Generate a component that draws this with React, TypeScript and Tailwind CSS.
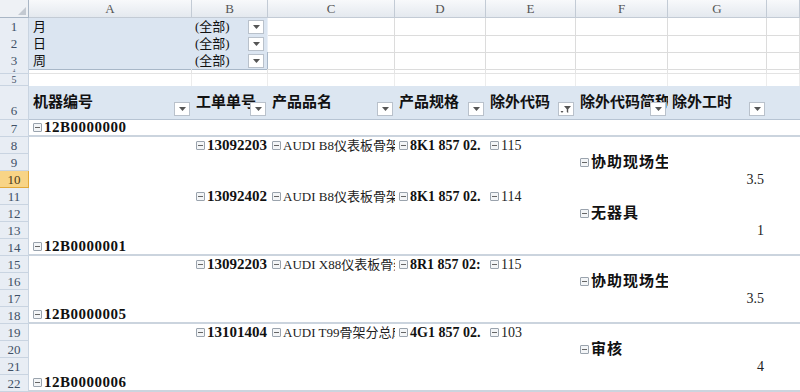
import React from 'react'

const grid = 'grid grid-cols-[29px_163px_76px_127px_91px_90px_92px_99px_33px]'

type Cell = { t: string; b?: boolean; m?: boolean; r?: boolean; s?: string }

const MinusBox = () => (
  <span className="inline-flex h-[9px] w-[9px] shrink-0 items-center justify-center rounded-[1px] border border-[#9aa3ad] bg-[#f3f5f7]">
    <span className="h-px w-[5px] bg-[#666]" />
  </span>
)

const DropButton = ({ filter }: { filter?: boolean }) => (
  <span className="flex h-[14px] w-[16px] items-center justify-center border border-[#b9c1cb] bg-white">
    {filter ? (
      <svg width="12" height="9" viewBox="0 0 12 9">
        <path d="M4 1h7L8.2 4.3V8L6.8 7V4.3z" fill="#555" />
        <path d="M0.5 6h3L2 8z" fill="#555" />
      </svg>
    ) : (
      <svg width="7" height="4" viewBox="0 0 7 4">
        <path d="M0 0h7L3.5 4z" fill="#555" />
      </svg>
    )}
  </span>
)

const RowNum = ({ n, active, end }: { n: string; active?: boolean; end?: boolean }) => (
  <div
    className={
      active
        ? 'flex items-center justify-center overflow-hidden border-b border-r border-[#e2a93a] bg-[#f8d486] text-[13px] leading-[13px] text-[#4a3a1a]'
        : end
        ? 'flex items-end justify-center overflow-hidden border-b border-r border-[#c9d4e1] bg-[#e8edf4] pb-[2px] text-[13px] leading-[13px] text-[#3f5066]'
        : 'flex items-center justify-center overflow-hidden border-b border-r border-[#c9d4e1] bg-[#e8edf4] text-[13px] leading-[13px] text-[#3f5066]'
    }
  >
    {n}
  </div>
)

const data: { n: string; sep?: boolean; cells: (Cell | null)[] }[] = [
  { n: '7', sep: true, cells: [{ t: '12B0000000', b: true, m: true, s: 'a' }] },
  {
    n: '8',
    cells: [
      null,
      { t: '13092203', b: true, m: true },
      { t: 'AUDI B8仪表板骨架', m: true, s: 'c' },
      { t: '8K1 857 02.', b: true, m: true, s: 'd' },
      { t: '115', m: true },
    ],
  },
  { n: '9', cells: [null, null, null, null, null, { t: '协助现场生产', b: true, m: true, s: 'f' }] },
  { n: '10', cells: [null, null, null, null, null, null, { t: '3.5', r: true }] },
  {
    n: '11',
    cells: [
      null,
      { t: '13092402', b: true, m: true },
      { t: 'AUDI B8仪表板骨架', m: true, s: 'c' },
      { t: '8K1 857 02.', b: true, m: true, s: 'd' },
      { t: '114', m: true },
    ],
  },
  { n: '12', cells: [null, null, null, null, null, { t: '无器具', b: true, m: true, s: 'f' }] },
  { n: '13', cells: [null, null, null, null, null, null, { t: '1', r: true }] },
  { n: '14', sep: true, cells: [{ t: '12B0000001', b: true, m: true, s: 'a' }] },
  {
    n: '15',
    cells: [
      null,
      { t: '13092203', b: true, m: true },
      { t: 'AUDI X88仪表板骨架', m: true, s: 'c' },
      { t: '8R1 857 02:', b: true, m: true, s: 'd' },
      { t: '115', m: true },
    ],
  },
  { n: '16', cells: [null, null, null, null, null, { t: '协助现场生产', b: true, m: true, s: 'f' }] },
  { n: '17', cells: [null, null, null, null, null, null, { t: '3.5', r: true }] },
  { n: '18', sep: true, cells: [{ t: '12B0000005', b: true, m: true, s: 'a' }] },
  {
    n: '19',
    cells: [
      null,
      { t: '13101404', b: true, m: true },
      { t: 'AUDI T99骨架分总成', m: true, s: 'c' },
      { t: '4G1 857 02.', b: true, m: true, s: 'd' },
      { t: '103', m: true },
    ],
  },
  { n: '20', cells: [null, null, null, null, null, { t: '审核', b: true, m: true, s: 'f' }] },
  { n: '21', cells: [null, null, null, null, null, null, { t: '4', r: true }] },
  { n: '22', sep: true, cells: [{ t: '12B0000006', b: true, m: true, s: 'a' }] },
]

const textClass = (c: Cell) => {
  if (c.s === 'a') return 'text-[15px] font-bold tracking-[0.5px] text-[#111]'
  if (c.s === 'c') return 'text-[13px] text-[#222]'
  if (c.s === 'd') return 'text-[14px] font-bold text-[#111]'
  if (c.s === 'f') return 'text-[15px] font-bold tracking-[1px] text-[#111]'
  if (c.b) return 'text-[15px] font-bold text-[#111]'
  return 'text-[14px] text-[#222]'
}

const headers = ['机器编号', '工单单号', '产品品名', '产品规格', '除外代码', '除外代码简称', '除外工时']

export default function App() {
  return (
    <div className="h-[392px] w-[800px] overflow-hidden bg-white font-['Liberation_Serif','Noto_Sans_CJK_SC',serif] leading-[17px] text-[#111]">
      {/* column letters */}
      <div className={`${grid} h-[18px]`}>
        <div className="flex items-end justify-end border-b border-r border-[#a9b6c5] bg-[#eef1f5] p-[2px]">
          <svg width="8" height="8" viewBox="0 0 8 8">
            <path d="M8 0v8H0z" fill="#c3c9d1" />
          </svg>
        </div>
        {['A', 'B', 'C', 'D', 'E', 'F', 'G', ''].map((l, i) => (
          <div
            key={i}
            className="flex items-center justify-center border-b border-r border-[#c3cbd5] bg-linear-to-b from-[#f8f9fb] to-[#e4e9ef] text-[13px] text-[#555]"
          >
            {l}
          </div>
        ))}
      </div>

      {/* page filters */}
      {[
        ['1', '月'],
        ['2', '日'],
        ['3', '周'],
      ].map(([n, label]) => (
        <div key={n} className={`${grid} h-[17px]`}>
          <RowNum n={n} />
          <div
            className={
              n === '3'
                ? 'flex items-center border-b border-[#a8b7c8] bg-[#dbe5f1] pl-[4px] text-[13px] text-[#111]'
                : 'flex items-center border-b border-[#e9eff7] bg-[#dbe5f1] pl-[4px] text-[13px] text-[#111]'
            }
          >
            {label}
          </div>
          <div
            className={
              n === '3'
                ? 'flex items-center justify-between border-b border-r border-[#a8b7c8] bg-[#dbe5f1] pl-[3px] pr-[3px] text-[13px] text-[#111]'
                : 'flex items-center justify-between border-b border-r border-[#e9eff7] bg-[#dbe5f1] pl-[3px] pr-[3px] text-[13px] text-[#111]'
            }
          >
            <span>(全部)</span>
            <DropButton />
          </div>
          {[0, 1, 2, 3, 4, 5].map((i) => (
            <div key={i} className="border-b border-r border-[#dcdcdc]" />
          ))}
        </div>
      ))}

      {/* rows 4 and 5, squeezed */}
      <div className={`${grid} h-[5px]`}>
        <div className="flex items-center justify-center overflow-hidden border-b border-r border-[#c9d4e1] bg-[#e8edf4] text-[5px] leading-[4px] text-[#3f5066]">
          4
        </div>
        {[0, 1, 2, 3, 4, 5, 6, 7].map((i) => (
          <div key={i} className="border-b border-r border-[#e3e3e3]" />
        ))}
      </div>
      <div className={`${grid} h-[12px]`}>
        <div className="flex items-center justify-center overflow-hidden border-b border-r border-[#c9d4e1] bg-[#e8edf4] text-[10px] leading-[10px] text-[#3f5066]">
          5
        </div>
        {[0, 1, 2, 3, 4, 5, 6, 7].map((i) => (
          <div key={i} className="border-r border-[#ececec]" />
        ))}
      </div>

      {/* pivot header row */}
      <div className={`${grid} h-[34px]`}>
        <RowNum n="6" end />
        {headers.map((h, i) => (
          <div
            key={h}
            className="relative overflow-hidden whitespace-nowrap border-b border-[#b7c4d3] bg-[#dce6f1] pl-[4px] pt-[8px] text-[15px] font-bold text-[#111]"
          >
            {h}
            <span className="absolute bottom-[3px] right-[2px]">
              <DropButton filter={i === 4} />
            </span>
          </div>
        ))}
        <div className="border-b border-[#b7c4d3] bg-[#dce6f1]" />
      </div>

      {/* pivot body */}
      {data.map((row) => (
        <div key={row.n} className={`${grid} h-[17px]`}>
          <RowNum n={row.n} active={row.n === '10'} />
          {[0, 1, 2, 3, 4, 5, 6, 7].map((i) => {
            const c = row.cells[i]
            return (
              <div
                key={i}
                className={
                  row.sep
                    ? 'flex items-center overflow-hidden whitespace-nowrap border-b-2 border-[#cbd4de] pl-[4px]'
                    : c && c.r
                    ? 'flex items-center justify-end overflow-hidden whitespace-nowrap pr-[3px]'
                    : 'flex items-center overflow-hidden whitespace-nowrap pl-[4px]'
                }
              >
                {c && (
                  <span className={`flex items-center gap-[2px] ${textClass(c)}`}>
                    {c.m && <MinusBox />}
                    <span className="whitespace-pre">{c.t}</span>
                  </span>
                )}
              </div>
            )
          })}
        </div>
      ))}
    </div>
  )
}
